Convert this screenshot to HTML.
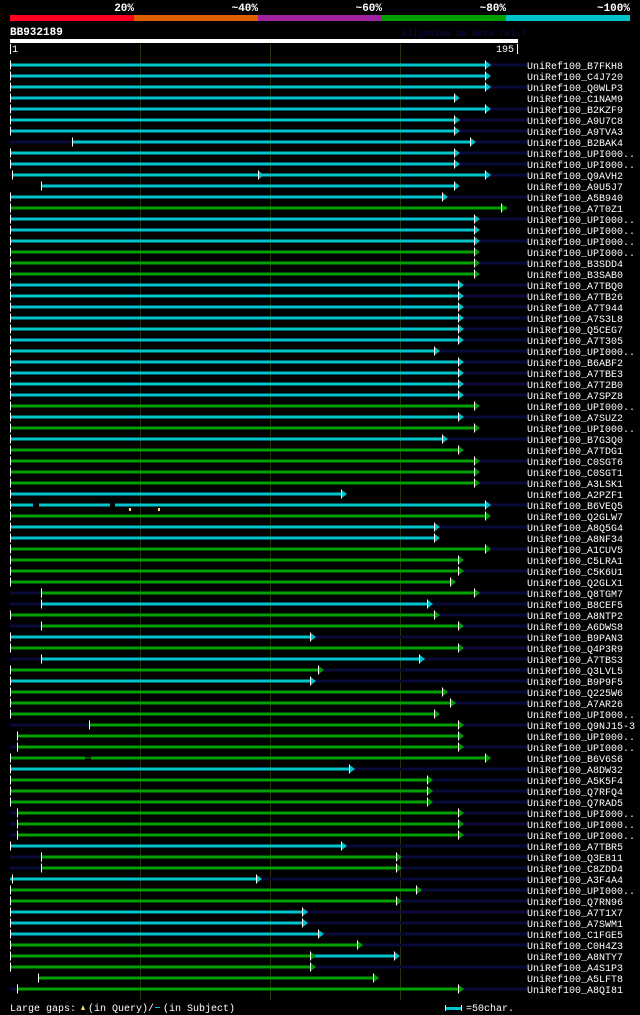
<!DOCTYPE html>
<html><head><meta charset="utf-8"><style>
html,body{margin:0;padding:0;background:#000;width:640px;height:1015px;overflow:hidden}
svg{display:block}
text{font-family:"Liberation Mono",monospace;font-size:10px;fill:#fff}
.t{fill:#0a0a38}.c{fill:#00c4cc}.g{fill:#00a000}.w{fill:#fff}
</style></head><body>
<svg width="640" height="1015" xmlns="http://www.w3.org/2000/svg">
<defs>
<symbol id="x"></symbol>
</defs>
<g font-weight="bold" style="font-weight:bold">
<text x="134" y="11" text-anchor="end" style="font-weight:bold;font-size:11px">20%</text>
<text x="258" y="11" text-anchor="end" style="font-weight:bold;font-size:11px">~40%</text>
<text x="382" y="11" text-anchor="end" style="font-weight:bold;font-size:11px">~60%</text>
<text x="506" y="11" text-anchor="end" style="font-weight:bold;font-size:11px">~80%</text>
<text x="630" y="11" text-anchor="end" style="font-weight:bold;font-size:11px">~100%</text>
</g>
<rect x="10" y="15" width="124" height="6" fill="#ff0020"/>
<rect x="134" y="15" width="124" height="6" fill="#e06000"/>
<rect x="258" y="15" width="124" height="6" fill="#a020a0"/>
<rect x="382" y="15" width="124" height="6" fill="#00a000"/>
<rect x="506" y="15" width="124" height="6" fill="#00c4cc"/>
<text x="10" y="35" style="font-weight:bold;font-size:11px">BB932189</text>
<text x="402" y="36" style="fill:#0a0a50;font-size:9px">AlignView.pm Beta rel.7</text>
<rect x="10" y="39" width="508" height="4" fill="#fff"/>
<rect x="140" y="44" width="1" height="956" fill="#303010"/>
<rect x="270" y="44" width="1" height="956" fill="#303010"/>
<rect x="400" y="44" width="1" height="956" fill="#303010"/>
<rect x="10" y="44" width="1" height="10" fill="#fff"/>
<text x="12" y="52">1</text>
<text x="496" y="52">195</text>
<rect x="517" y="44" width="1" height="10" fill="#fff"/>

<g id="rows">
<g transform="translate(0,65)"><rect class="t" x="10" y="-1.5" width="517" height="3"/><rect class="c" x="10" y="-1.5" width="475" height="3"/><path class="c" d="M485,-4.5L491,0L485,4.5Z"/><rect class="w" x="485" y="-4.5" width="1" height="9"/><rect class="w" x="10" y="-4.5" width="1" height="9"/><text x="527" y="4">UniRef100_B7FKH8</text></g>
<g transform="translate(0,76)"><rect class="c" x="10" y="-1.5" width="475" height="3"/><path class="c" d="M485,-4.5L491,0L485,4.5Z"/><rect class="w" x="485" y="-4.5" width="1" height="9"/><rect class="w" x="10" y="-4.5" width="1" height="9"/><text x="527" y="4">UniRef100_C4J720</text></g>
<g transform="translate(0,87)"><rect class="t" x="10" y="-1.5" width="517" height="3"/><rect class="c" x="10" y="-1.5" width="475" height="3"/><path class="c" d="M485,-4.5L491,0L485,4.5Z"/><rect class="w" x="485" y="-4.5" width="1" height="9"/><rect class="w" x="10" y="-4.5" width="1" height="9"/><text x="527" y="4">UniRef100_Q0WLP3</text></g>
<g transform="translate(0,98)"><rect class="c" x="10" y="-1.5" width="444" height="3"/><path class="c" d="M454,-4.5L460,0L454,4.5Z"/><rect class="w" x="454" y="-4.5" width="1" height="9"/><rect class="w" x="10" y="-4.5" width="1" height="9"/><text x="527" y="4">UniRef100_C1NAM9</text></g>
<g transform="translate(0,109)"><rect class="t" x="10" y="-1.5" width="517" height="3"/><rect class="c" x="10" y="-1.5" width="475" height="3"/><path class="c" d="M485,-4.5L491,0L485,4.5Z"/><rect class="w" x="485" y="-4.5" width="1" height="9"/><rect class="w" x="10" y="-4.5" width="1" height="9"/><text x="527" y="4">UniRef100_B2KZF9</text></g>
<g transform="translate(0,120)"><rect class="t" x="10" y="-1.5" width="517" height="3"/><rect class="c" x="10" y="-1.5" width="444" height="3"/><path class="c" d="M454,-4.5L460,0L454,4.5Z"/><rect class="w" x="454" y="-4.5" width="1" height="9"/><rect class="w" x="10" y="-4.5" width="1" height="9"/><text x="527" y="4">UniRef100_A9U7C8</text></g>
<g transform="translate(0,131)"><rect class="t" x="10" y="-1.5" width="517" height="3"/><rect class="c" x="10" y="-1.5" width="444" height="3"/><path class="c" d="M454,-4.5L460,0L454,4.5Z"/><rect class="w" x="454" y="-4.5" width="1" height="9"/><rect class="w" x="10" y="-4.5" width="1" height="9"/><text x="527" y="4">UniRef100_A9TVA3</text></g>
<g transform="translate(0,142)"><rect class="t" x="10" y="-1.5" width="517" height="3"/><rect class="c" x="72" y="-1.5" width="398" height="3"/><path class="c" d="M470,-4.5L476,0L470,4.5Z"/><rect class="w" x="470" y="-4.5" width="1" height="9"/><rect class="w" x="72" y="-4.5" width="1" height="9"/><text x="527" y="4">UniRef100_B2BAK4</text></g>
<g transform="translate(0,153)"><rect class="t" x="10" y="-1.5" width="517" height="3"/><rect class="c" x="10" y="-1.5" width="444" height="3"/><path class="c" d="M454,-4.5L460,0L454,4.5Z"/><rect class="w" x="454" y="-4.5" width="1" height="9"/><rect class="w" x="10" y="-4.5" width="1" height="9"/><text x="527" y="4">UniRef100_UPI000..</text></g>
<g transform="translate(0,164)"><rect class="t" x="10" y="-1.5" width="517" height="3"/><rect class="c" x="10" y="-1.5" width="444" height="3"/><path class="c" d="M454,-4.5L460,0L454,4.5Z"/><rect class="w" x="454" y="-4.5" width="1" height="9"/><rect class="w" x="10" y="-4.5" width="1" height="9"/><text x="527" y="4">UniRef100_UPI000..</text></g>
<g transform="translate(0,175)"><rect class="t" x="10" y="-1.5" width="517" height="3"/><rect class="c" x="12" y="-1.5" width="473" height="3"/><path class="c" d="M258,-4.5L264,0L258,4.5Z"/><rect class="w" x="258" y="-4.5" width="1" height="9"/><path class="c" d="M485,-4.5L491,0L485,4.5Z"/><rect class="w" x="485" y="-4.5" width="1" height="9"/><rect class="w" x="12" y="-4.5" width="1" height="9"/><text x="527" y="4">UniRef100_Q9AVH2</text></g>
<g transform="translate(0,186)"><rect class="c" x="41" y="-1.5" width="413" height="3"/><path class="c" d="M454,-4.5L460,0L454,4.5Z"/><rect class="w" x="454" y="-4.5" width="1" height="9"/><rect class="w" x="41" y="-4.5" width="1" height="9"/><text x="527" y="4">UniRef100_A9U5J7</text></g>
<g transform="translate(0,197)"><rect class="t" x="10" y="-1.5" width="517" height="3"/><rect class="c" x="10" y="-1.5" width="432" height="3"/><path class="c" d="M442,-4.5L448,0L442,4.5Z"/><rect class="w" x="442" y="-4.5" width="1" height="9"/><rect class="w" x="10" y="-4.5" width="1" height="9"/><text x="527" y="4">UniRef100_A5B940</text></g>
<g transform="translate(0,208)"><rect class="g" x="10" y="-1.5" width="497" height="3"/><path class="g" d="M501,-4.5L507,0L501,4.5Z"/><rect class="w" x="501" y="-4.5" width="1" height="9"/><rect class="w" x="10" y="-4.5" width="1" height="9"/><text x="527" y="4">UniRef100_A7T0Z1</text></g>
<g transform="translate(0,219)"><rect class="t" x="10" y="-1.5" width="517" height="3"/><rect class="c" x="10" y="-1.5" width="464" height="3"/><path class="c" d="M474,-4.5L480,0L474,4.5Z"/><rect class="w" x="474" y="-4.5" width="1" height="9"/><rect class="w" x="10" y="-4.5" width="1" height="9"/><text x="527" y="4">UniRef100_UPI000..</text></g>
<g transform="translate(0,230)"><rect class="c" x="10" y="-1.5" width="464" height="3"/><path class="c" d="M474,-4.5L480,0L474,4.5Z"/><rect class="w" x="474" y="-4.5" width="1" height="9"/><rect class="w" x="10" y="-4.5" width="1" height="9"/><text x="527" y="4">UniRef100_UPI000..</text></g>
<g transform="translate(0,241)"><rect class="t" x="10" y="-1.5" width="517" height="3"/><rect class="c" x="10" y="-1.5" width="464" height="3"/><path class="c" d="M474,-4.5L480,0L474,4.5Z"/><rect class="w" x="474" y="-4.5" width="1" height="9"/><rect class="w" x="10" y="-4.5" width="1" height="9"/><text x="527" y="4">UniRef100_UPI000..</text></g>
<g transform="translate(0,252)"><rect class="g" x="10" y="-1.5" width="464" height="3"/><path class="g" d="M474,-4.5L480,0L474,4.5Z"/><rect class="w" x="474" y="-4.5" width="1" height="9"/><rect class="w" x="10" y="-4.5" width="1" height="9"/><text x="527" y="4">UniRef100_UPI000..</text></g>
<g transform="translate(0,263)"><rect class="t" x="10" y="-1.5" width="517" height="3"/><rect class="g" x="10" y="-1.5" width="464" height="3"/><path class="g" d="M474,-4.5L480,0L474,4.5Z"/><rect class="w" x="474" y="-4.5" width="1" height="9"/><rect class="w" x="10" y="-4.5" width="1" height="9"/><text x="527" y="4">UniRef100_B3SDD4</text></g>
<g transform="translate(0,274)"><rect class="g" x="10" y="-1.5" width="464" height="3"/><path class="g" d="M474,-4.5L480,0L474,4.5Z"/><rect class="w" x="474" y="-4.5" width="1" height="9"/><rect class="w" x="10" y="-4.5" width="1" height="9"/><text x="527" y="4">UniRef100_B3SAB0</text></g>
<g transform="translate(0,285)"><rect class="t" x="10" y="-1.5" width="517" height="3"/><rect class="c" x="10" y="-1.5" width="448" height="3"/><path class="c" d="M458,-4.5L464,0L458,4.5Z"/><rect class="w" x="458" y="-4.5" width="1" height="9"/><rect class="w" x="10" y="-4.5" width="1" height="9"/><text x="527" y="4">UniRef100_A7TBQ0</text></g>
<g transform="translate(0,296)"><rect class="t" x="10" y="-1.5" width="517" height="3"/><rect class="c" x="10" y="-1.5" width="448" height="3"/><path class="c" d="M458,-4.5L464,0L458,4.5Z"/><rect class="w" x="458" y="-4.5" width="1" height="9"/><rect class="w" x="10" y="-4.5" width="1" height="9"/><text x="527" y="4">UniRef100_A7TB26</text></g>
<g transform="translate(0,307)"><rect class="t" x="10" y="-1.5" width="517" height="3"/><rect class="c" x="10" y="-1.5" width="448" height="3"/><path class="c" d="M458,-4.5L464,0L458,4.5Z"/><rect class="w" x="458" y="-4.5" width="1" height="9"/><rect class="w" x="10" y="-4.5" width="1" height="9"/><text x="527" y="4">UniRef100_A7T944</text></g>
<g transform="translate(0,318)"><rect class="t" x="10" y="-1.5" width="517" height="3"/><rect class="c" x="10" y="-1.5" width="448" height="3"/><path class="c" d="M458,-4.5L464,0L458,4.5Z"/><rect class="w" x="458" y="-4.5" width="1" height="9"/><rect class="w" x="10" y="-4.5" width="1" height="9"/><text x="527" y="4">UniRef100_A7S3L8</text></g>
<g transform="translate(0,329)"><rect class="t" x="10" y="-1.5" width="517" height="3"/><rect class="c" x="10" y="-1.5" width="448" height="3"/><path class="c" d="M458,-4.5L464,0L458,4.5Z"/><rect class="w" x="458" y="-4.5" width="1" height="9"/><rect class="w" x="10" y="-4.5" width="1" height="9"/><text x="527" y="4">UniRef100_Q5CEG7</text></g>
<g transform="translate(0,340)"><rect class="t" x="10" y="-1.5" width="517" height="3"/><rect class="c" x="10" y="-1.5" width="448" height="3"/><path class="c" d="M458,-4.5L464,0L458,4.5Z"/><rect class="w" x="458" y="-4.5" width="1" height="9"/><rect class="w" x="10" y="-4.5" width="1" height="9"/><text x="527" y="4">UniRef100_A7T305</text></g>
<g transform="translate(0,351)"><rect class="t" x="10" y="-1.5" width="517" height="3"/><rect class="c" x="10" y="-1.5" width="424" height="3"/><path class="c" d="M434,-4.5L440,0L434,4.5Z"/><rect class="w" x="434" y="-4.5" width="1" height="9"/><rect class="w" x="10" y="-4.5" width="1" height="9"/><text x="527" y="4">UniRef100_UPI000..</text></g>
<g transform="translate(0,362)"><rect class="t" x="10" y="-1.5" width="517" height="3"/><rect class="c" x="10" y="-1.5" width="448" height="3"/><path class="c" d="M458,-4.5L464,0L458,4.5Z"/><rect class="w" x="458" y="-4.5" width="1" height="9"/><rect class="w" x="10" y="-4.5" width="1" height="9"/><text x="527" y="4">UniRef100_B6ABF2</text></g>
<g transform="translate(0,373)"><rect class="t" x="10" y="-1.5" width="517" height="3"/><rect class="c" x="10" y="-1.5" width="448" height="3"/><path class="c" d="M458,-4.5L464,0L458,4.5Z"/><rect class="w" x="458" y="-4.5" width="1" height="9"/><rect class="w" x="10" y="-4.5" width="1" height="9"/><text x="527" y="4">UniRef100_A7TBE3</text></g>
<g transform="translate(0,384)"><rect class="t" x="10" y="-1.5" width="517" height="3"/><rect class="c" x="10" y="-1.5" width="448" height="3"/><path class="c" d="M458,-4.5L464,0L458,4.5Z"/><rect class="w" x="458" y="-4.5" width="1" height="9"/><rect class="w" x="10" y="-4.5" width="1" height="9"/><text x="527" y="4">UniRef100_A7T2B0</text></g>
<g transform="translate(0,395)"><rect class="t" x="10" y="-1.5" width="517" height="3"/><rect class="c" x="10" y="-1.5" width="448" height="3"/><path class="c" d="M458,-4.5L464,0L458,4.5Z"/><rect class="w" x="458" y="-4.5" width="1" height="9"/><rect class="w" x="10" y="-4.5" width="1" height="9"/><text x="527" y="4">UniRef100_A7SPZ8</text></g>
<g transform="translate(0,406)"><rect class="g" x="10" y="-1.5" width="464" height="3"/><path class="g" d="M474,-4.5L480,0L474,4.5Z"/><rect class="w" x="474" y="-4.5" width="1" height="9"/><rect class="w" x="10" y="-4.5" width="1" height="9"/><text x="527" y="4">UniRef100_UPI000..</text></g>
<g transform="translate(0,417)"><rect class="t" x="10" y="-1.5" width="517" height="3"/><rect class="c" x="10" y="-1.5" width="448" height="3"/><path class="c" d="M458,-4.5L464,0L458,4.5Z"/><rect class="w" x="458" y="-4.5" width="1" height="9"/><rect class="w" x="10" y="-4.5" width="1" height="9"/><text x="527" y="4">UniRef100_A7SUZ2</text></g>
<g transform="translate(0,428)"><rect class="g" x="10" y="-1.5" width="464" height="3"/><path class="g" d="M474,-4.5L480,0L474,4.5Z"/><rect class="w" x="474" y="-4.5" width="1" height="9"/><rect class="w" x="10" y="-4.5" width="1" height="9"/><text x="527" y="4">UniRef100_UPI000..</text></g>
<g transform="translate(0,439)"><rect class="t" x="10" y="-1.5" width="517" height="3"/><rect class="c" x="10" y="-1.5" width="432" height="3"/><path class="c" d="M442,-4.5L448,0L442,4.5Z"/><rect class="w" x="442" y="-4.5" width="1" height="9"/><rect class="w" x="10" y="-4.5" width="1" height="9"/><text x="527" y="4">UniRef100_B7G3Q0</text></g>
<g transform="translate(0,450)"><rect class="g" x="10" y="-1.5" width="448" height="3"/><path class="g" d="M458,-4.5L464,0L458,4.5Z"/><rect class="w" x="458" y="-4.5" width="1" height="9"/><rect class="w" x="10" y="-4.5" width="1" height="9"/><text x="527" y="4">UniRef100_A7TDG1</text></g>
<g transform="translate(0,461)"><rect class="t" x="10" y="-1.5" width="517" height="3"/><rect class="g" x="10" y="-1.5" width="464" height="3"/><path class="g" d="M474,-4.5L480,0L474,4.5Z"/><rect class="w" x="474" y="-4.5" width="1" height="9"/><rect class="w" x="10" y="-4.5" width="1" height="9"/><text x="527" y="4">UniRef100_C0SGT6</text></g>
<g transform="translate(0,472)"><rect class="g" x="10" y="-1.5" width="464" height="3"/><path class="g" d="M474,-4.5L480,0L474,4.5Z"/><rect class="w" x="474" y="-4.5" width="1" height="9"/><rect class="w" x="10" y="-4.5" width="1" height="9"/><text x="527" y="4">UniRef100_C0SGT1</text></g>
<g transform="translate(0,483)"><rect class="t" x="10" y="-1.5" width="517" height="3"/><rect class="g" x="10" y="-1.5" width="464" height="3"/><path class="g" d="M474,-4.5L480,0L474,4.5Z"/><rect class="w" x="474" y="-4.5" width="1" height="9"/><rect class="w" x="10" y="-4.5" width="1" height="9"/><text x="527" y="4">UniRef100_A3LSK1</text></g>
<g transform="translate(0,494)"><rect class="c" x="10" y="-1.5" width="331" height="3"/><path class="c" d="M341,-4.5L347,0L341,4.5Z"/><rect class="w" x="341" y="-4.5" width="1" height="9"/><rect class="w" x="10" y="-4.5" width="1" height="9"/><text x="527" y="4">UniRef100_A2PZF1</text></g>
<g transform="translate(0,505)"><rect class="t" x="10" y="-1.5" width="517" height="3"/><rect class="c" x="10" y="-1.5" width="475" height="3"/><rect x="33" y="-1.5" width="6" height="3" fill="#000"/><rect x="110" y="-1.5" width="5" height="3" fill="#000"/><rect x="129" y="3" width="2" height="3" fill="#ffe060"/><rect x="158" y="3" width="2" height="3" fill="#ffe060"/><path class="c" d="M485,-4.5L491,0L485,4.5Z"/><rect class="w" x="485" y="-4.5" width="1" height="9"/><rect class="w" x="10" y="-4.5" width="1" height="9"/><text x="527" y="4">UniRef100_B6VEQ5</text></g>
<g transform="translate(0,516)"><rect class="g" x="10" y="-1.5" width="475" height="3"/><path class="g" d="M485,-4.5L491,0L485,4.5Z"/><rect class="w" x="485" y="-4.5" width="1" height="9"/><rect class="w" x="10" y="-4.5" width="1" height="9"/><text x="527" y="4">UniRef100_Q2GLW7</text></g>
<g transform="translate(0,527)"><rect class="t" x="10" y="-1.5" width="517" height="3"/><rect class="c" x="10" y="-1.5" width="424" height="3"/><path class="c" d="M434,-4.5L440,0L434,4.5Z"/><rect class="w" x="434" y="-4.5" width="1" height="9"/><rect class="w" x="10" y="-4.5" width="1" height="9"/><text x="527" y="4">UniRef100_A8Q5G4</text></g>
<g transform="translate(0,538)"><rect class="c" x="10" y="-1.5" width="424" height="3"/><path class="c" d="M434,-4.5L440,0L434,4.5Z"/><rect class="w" x="434" y="-4.5" width="1" height="9"/><rect class="w" x="10" y="-4.5" width="1" height="9"/><text x="527" y="4">UniRef100_A8NF34</text></g>
<g transform="translate(0,549)"><rect class="t" x="10" y="-1.5" width="517" height="3"/><rect class="g" x="10" y="-1.5" width="475" height="3"/><path class="g" d="M485,-4.5L491,0L485,4.5Z"/><rect class="w" x="485" y="-4.5" width="1" height="9"/><rect class="w" x="10" y="-4.5" width="1" height="9"/><text x="527" y="4">UniRef100_A1CUV5</text></g>
<g transform="translate(0,560)"><rect class="g" x="10" y="-1.5" width="448" height="3"/><path class="g" d="M458,-4.5L464,0L458,4.5Z"/><rect class="w" x="458" y="-4.5" width="1" height="9"/><rect class="w" x="10" y="-4.5" width="1" height="9"/><text x="527" y="4">UniRef100_C5LRA1</text></g>
<g transform="translate(0,571)"><rect class="t" x="10" y="-1.5" width="517" height="3"/><rect class="g" x="10" y="-1.5" width="448" height="3"/><path class="g" d="M458,-4.5L464,0L458,4.5Z"/><rect class="w" x="458" y="-4.5" width="1" height="9"/><rect class="w" x="10" y="-4.5" width="1" height="9"/><text x="527" y="4">UniRef100_C5K6U1</text></g>
<g transform="translate(0,582)"><rect class="g" x="10" y="-1.5" width="440" height="3"/><path class="g" d="M450,-4.5L456,0L450,4.5Z"/><rect class="w" x="450" y="-4.5" width="1" height="9"/><rect class="w" x="10" y="-4.5" width="1" height="9"/><text x="527" y="4">UniRef100_Q2GLX1</text></g>
<g transform="translate(0,593)"><rect class="t" x="10" y="-1.5" width="517" height="3"/><rect class="g" x="41" y="-1.5" width="433" height="3"/><path class="g" d="M474,-4.5L480,0L474,4.5Z"/><rect class="w" x="474" y="-4.5" width="1" height="9"/><rect class="w" x="41" y="-4.5" width="1" height="9"/><text x="527" y="4">UniRef100_Q8TGM7</text></g>
<g transform="translate(0,604)"><rect class="t" x="10" y="-1.5" width="517" height="3"/><rect class="c" x="41" y="-1.5" width="386" height="3"/><path class="c" d="M427,-4.5L433,0L427,4.5Z"/><rect class="w" x="427" y="-4.5" width="1" height="9"/><rect class="w" x="41" y="-4.5" width="1" height="9"/><text x="527" y="4">UniRef100_B8CEF5</text></g>
<g transform="translate(0,615)"><rect class="t" x="10" y="-1.5" width="517" height="3"/><rect class="g" x="10" y="-1.5" width="424" height="3"/><path class="g" d="M434,-4.5L440,0L434,4.5Z"/><rect class="w" x="434" y="-4.5" width="1" height="9"/><rect class="w" x="10" y="-4.5" width="1" height="9"/><text x="527" y="4">UniRef100_A8NTP2</text></g>
<g transform="translate(0,626)"><rect class="t" x="10" y="-1.5" width="517" height="3"/><rect class="g" x="41" y="-1.5" width="417" height="3"/><path class="g" d="M458,-4.5L464,0L458,4.5Z"/><rect class="w" x="458" y="-4.5" width="1" height="9"/><rect class="w" x="41" y="-4.5" width="1" height="9"/><text x="527" y="4">UniRef100_A6DWS8</text></g>
<g transform="translate(0,637)"><rect class="t" x="10" y="-1.5" width="517" height="3"/><rect class="c" x="10" y="-1.5" width="300" height="3"/><path class="c" d="M310,-4.5L316,0L310,4.5Z"/><rect class="w" x="310" y="-4.5" width="1" height="9"/><rect class="w" x="10" y="-4.5" width="1" height="9"/><text x="527" y="4">UniRef100_B9PAN3</text></g>
<g transform="translate(0,648)"><rect class="t" x="10" y="-1.5" width="517" height="3"/><rect class="g" x="10" y="-1.5" width="448" height="3"/><path class="g" d="M458,-4.5L464,0L458,4.5Z"/><rect class="w" x="458" y="-4.5" width="1" height="9"/><rect class="w" x="10" y="-4.5" width="1" height="9"/><text x="527" y="4">UniRef100_Q4P3R9</text></g>
<g transform="translate(0,659)"><rect class="t" x="10" y="-1.5" width="517" height="3"/><rect class="c" x="41" y="-1.5" width="378" height="3"/><path class="c" d="M419,-4.5L425,0L419,4.5Z"/><rect class="w" x="419" y="-4.5" width="1" height="9"/><rect class="w" x="41" y="-4.5" width="1" height="9"/><text x="527" y="4">UniRef100_A7TBS3</text></g>
<g transform="translate(0,670)"><rect class="t" x="10" y="-1.5" width="517" height="3"/><rect class="g" x="10" y="-1.5" width="308" height="3"/><path class="g" d="M318,-4.5L324,0L318,4.5Z"/><rect class="w" x="318" y="-4.5" width="1" height="9"/><rect class="w" x="10" y="-4.5" width="1" height="9"/><text x="527" y="4">UniRef100_Q3LVL5</text></g>
<g transform="translate(0,681)"><rect class="t" x="10" y="-1.5" width="517" height="3"/><rect class="c" x="10" y="-1.5" width="300" height="3"/><path class="c" d="M310,-4.5L316,0L310,4.5Z"/><rect class="w" x="310" y="-4.5" width="1" height="9"/><rect class="w" x="10" y="-4.5" width="1" height="9"/><text x="527" y="4">UniRef100_B9P9F5</text></g>
<g transform="translate(0,692)"><rect class="t" x="10" y="-1.5" width="517" height="3"/><rect class="g" x="10" y="-1.5" width="432" height="3"/><path class="g" d="M442,-4.5L448,0L442,4.5Z"/><rect class="w" x="442" y="-4.5" width="1" height="9"/><rect class="w" x="10" y="-4.5" width="1" height="9"/><text x="527" y="4">UniRef100_Q225W6</text></g>
<g transform="translate(0,703)"><rect class="t" x="10" y="-1.5" width="517" height="3"/><rect class="g" x="10" y="-1.5" width="440" height="3"/><path class="g" d="M450,-4.5L456,0L450,4.5Z"/><rect class="w" x="450" y="-4.5" width="1" height="9"/><rect class="w" x="10" y="-4.5" width="1" height="9"/><text x="527" y="4">UniRef100_A7AR26</text></g>
<g transform="translate(0,714)"><rect class="g" x="10" y="-1.5" width="424" height="3"/><path class="g" d="M434,-4.5L440,0L434,4.5Z"/><rect class="w" x="434" y="-4.5" width="1" height="9"/><rect class="w" x="10" y="-4.5" width="1" height="9"/><text x="527" y="4">UniRef100_UPI000..</text></g>
<g transform="translate(0,725)"><rect class="t" x="10" y="-1.5" width="517" height="3"/><rect class="g" x="89" y="-1.5" width="369" height="3"/><path class="g" d="M458,-4.5L464,0L458,4.5Z"/><rect class="w" x="458" y="-4.5" width="1" height="9"/><rect class="w" x="89" y="-4.5" width="1" height="9"/><text x="527" y="4">UniRef100_Q9NJ15-3</text></g>
<g transform="translate(0,736)"><rect class="g" x="18" y="-1.5" width="440" height="3"/><path class="g" d="M458,-4.5L464,0L458,4.5Z"/><rect class="w" x="458" y="-4.5" width="1" height="9"/><rect class="w" x="17" y="-4.5" width="1" height="9"/><text x="527" y="4">UniRef100_UPI000..</text></g>
<g transform="translate(0,747)"><rect class="t" x="10" y="-1.5" width="517" height="3"/><rect class="g" x="18" y="-1.5" width="440" height="3"/><path class="g" d="M458,-4.5L464,0L458,4.5Z"/><rect class="w" x="458" y="-4.5" width="1" height="9"/><rect class="w" x="17" y="-4.5" width="1" height="9"/><text x="527" y="4">UniRef100_UPI000..</text></g>
<g transform="translate(0,758)"><rect class="g" x="10" y="-1.5" width="475" height="3"/><rect x="85" y="-1.5" width="6" height="3" fill="#000"/><rect x="85" y="-0.5" width="6" height="1" fill="#00a000"/><path class="g" d="M485,-4.5L491,0L485,4.5Z"/><rect class="w" x="485" y="-4.5" width="1" height="9"/><rect class="w" x="10" y="-4.5" width="1" height="9"/><text x="527" y="4">UniRef100_B6V6S6</text></g>
<g transform="translate(0,769)"><rect class="t" x="10" y="-1.5" width="517" height="3"/><rect class="c" x="10" y="-1.5" width="339" height="3"/><path class="c" d="M349,-4.5L355,0L349,4.5Z"/><rect class="w" x="349" y="-4.5" width="1" height="9"/><rect class="w" x="10" y="-4.5" width="1" height="9"/><text x="527" y="4">UniRef100_A8DW32</text></g>
<g transform="translate(0,780)"><rect class="t" x="10" y="-1.5" width="517" height="3"/><rect class="g" x="10" y="-1.5" width="417" height="3"/><path class="g" d="M427,-4.5L433,0L427,4.5Z"/><rect class="w" x="427" y="-4.5" width="1" height="9"/><rect class="w" x="10" y="-4.5" width="1" height="9"/><text x="527" y="4">UniRef100_A5K5F4</text></g>
<g transform="translate(0,791)"><rect class="t" x="10" y="-1.5" width="517" height="3"/><rect class="g" x="10" y="-1.5" width="417" height="3"/><path class="g" d="M427,-4.5L433,0L427,4.5Z"/><rect class="w" x="427" y="-4.5" width="1" height="9"/><rect class="w" x="10" y="-4.5" width="1" height="9"/><text x="527" y="4">UniRef100_Q7RFQ4</text></g>
<g transform="translate(0,802)"><rect class="t" x="10" y="-1.5" width="517" height="3"/><rect class="g" x="10" y="-1.5" width="417" height="3"/><path class="g" d="M427,-4.5L433,0L427,4.5Z"/><rect class="w" x="427" y="-4.5" width="1" height="9"/><rect class="w" x="10" y="-4.5" width="1" height="9"/><text x="527" y="4">UniRef100_Q7RAD5</text></g>
<g transform="translate(0,813)"><rect class="t" x="10" y="-1.5" width="517" height="3"/><rect class="g" x="18" y="-1.5" width="440" height="3"/><path class="g" d="M458,-4.5L464,0L458,4.5Z"/><rect class="w" x="458" y="-4.5" width="1" height="9"/><rect class="w" x="17" y="-4.5" width="1" height="9"/><text x="527" y="4">UniRef100_UPI000..</text></g>
<g transform="translate(0,824)"><rect class="t" x="10" y="-1.5" width="517" height="3"/><rect class="g" x="18" y="-1.5" width="440" height="3"/><path class="g" d="M458,-4.5L464,0L458,4.5Z"/><rect class="w" x="458" y="-4.5" width="1" height="9"/><rect class="w" x="17" y="-4.5" width="1" height="9"/><text x="527" y="4">UniRef100_UPI000..</text></g>
<g transform="translate(0,835)"><rect class="t" x="10" y="-1.5" width="517" height="3"/><rect class="g" x="18" y="-1.5" width="440" height="3"/><path class="g" d="M458,-4.5L464,0L458,4.5Z"/><rect class="w" x="458" y="-4.5" width="1" height="9"/><rect class="w" x="17" y="-4.5" width="1" height="9"/><text x="527" y="4">UniRef100_UPI000..</text></g>
<g transform="translate(0,846)"><rect class="t" x="10" y="-1.5" width="517" height="3"/><rect class="c" x="10" y="-1.5" width="331" height="3"/><path class="c" d="M341,-4.5L347,0L341,4.5Z"/><rect class="w" x="341" y="-4.5" width="1" height="9"/><rect class="w" x="10" y="-4.5" width="1" height="9"/><text x="527" y="4">UniRef100_A7TBR5</text></g>
<g transform="translate(0,857)"><rect class="t" x="10" y="-1.5" width="517" height="3"/><rect class="g" x="41" y="-1.5" width="355" height="3"/><path class="g" d="M396,-4.5L402,0L396,4.5Z"/><rect class="w" x="396" y="-4.5" width="1" height="9"/><rect class="w" x="41" y="-4.5" width="1" height="9"/><text x="527" y="4">UniRef100_Q3E811</text></g>
<g transform="translate(0,868)"><rect class="t" x="10" y="-1.5" width="517" height="3"/><rect class="g" x="41" y="-1.5" width="355" height="3"/><path class="g" d="M396,-4.5L402,0L396,4.5Z"/><rect class="w" x="396" y="-4.5" width="1" height="9"/><rect class="w" x="41" y="-4.5" width="1" height="9"/><text x="527" y="4">UniRef100_C8ZDD4</text></g>
<g transform="translate(0,879)"><rect class="t" x="10" y="-1.5" width="517" height="3"/><rect class="c" x="10" y="-1.5" width="246" height="3"/><path class="c" d="M256,-4.5L262,0L256,4.5Z"/><rect class="w" x="256" y="-4.5" width="1" height="9"/><rect class="w" x="12" y="-4.5" width="1" height="9"/><text x="527" y="4">UniRef100_A3F4A4</text></g>
<g transform="translate(0,890)"><rect class="t" x="10" y="-1.5" width="517" height="3"/><rect class="g" x="10" y="-1.5" width="406" height="3"/><path class="g" d="M416,-4.5L422,0L416,4.5Z"/><rect class="w" x="416" y="-4.5" width="1" height="9"/><rect class="w" x="10" y="-4.5" width="1" height="9"/><text x="527" y="4">UniRef100_UPI000..</text></g>
<g transform="translate(0,901)"><rect class="t" x="10" y="-1.5" width="517" height="3"/><rect class="g" x="10" y="-1.5" width="386" height="3"/><path class="g" d="M396,-4.5L402,0L396,4.5Z"/><rect class="w" x="396" y="-4.5" width="1" height="9"/><rect class="w" x="10" y="-4.5" width="1" height="9"/><text x="527" y="4">UniRef100_Q7RN96</text></g>
<g transform="translate(0,912)"><rect class="t" x="10" y="-1.5" width="517" height="3"/><rect class="c" x="10" y="-1.5" width="292" height="3"/><path class="c" d="M302,-4.5L308,0L302,4.5Z"/><rect class="w" x="302" y="-4.5" width="1" height="9"/><rect class="w" x="10" y="-4.5" width="1" height="9"/><text x="527" y="4">UniRef100_A7T1X7</text></g>
<g transform="translate(0,923)"><rect class="t" x="10" y="-1.5" width="517" height="3"/><rect class="c" x="10" y="-1.5" width="292" height="3"/><path class="c" d="M302,-4.5L308,0L302,4.5Z"/><rect class="w" x="302" y="-4.5" width="1" height="9"/><rect class="w" x="10" y="-4.5" width="1" height="9"/><text x="527" y="4">UniRef100_A7SWM1</text></g>
<g transform="translate(0,934)"><rect class="t" x="10" y="-1.5" width="517" height="3"/><rect class="c" x="10" y="-1.5" width="308" height="3"/><path class="c" d="M318,-4.5L324,0L318,4.5Z"/><rect class="w" x="318" y="-4.5" width="1" height="9"/><rect class="w" x="10" y="-4.5" width="1" height="9"/><text x="527" y="4">UniRef100_C1FGE5</text></g>
<g transform="translate(0,945)"><rect class="t" x="10" y="-1.5" width="517" height="3"/><rect class="g" x="10" y="-1.5" width="347" height="3"/><path class="g" d="M357,-4.5L363,0L357,4.5Z"/><rect class="w" x="357" y="-4.5" width="1" height="9"/><rect class="w" x="10" y="-4.5" width="1" height="9"/><text x="527" y="4">UniRef100_C0H4Z3</text></g>
<g transform="translate(0,956)"><rect class="g" x="10" y="-1.5" width="300" height="3"/><rect class="c" x="312" y="-1.5" width="83" height="3"/><path class="g" d="M310,-4.5L316,0L310,4.5Z"/><rect class="w" x="310" y="-4.5" width="1" height="9"/><path class="c" d="M394,-4.5L400,0L394,4.5Z"/><rect class="w" x="394" y="-4.5" width="1" height="9"/><rect class="w" x="10" y="-4.5" width="1" height="9"/><text x="527" y="4">UniRef100_A8NTY7</text></g>
<g transform="translate(0,967)"><rect class="t" x="10" y="-1.5" width="517" height="3"/><rect class="g" x="10" y="-1.5" width="300" height="3"/><path class="g" d="M310,-4.5L316,0L310,4.5Z"/><rect class="w" x="310" y="-4.5" width="1" height="9"/><rect class="w" x="10" y="-4.5" width="1" height="9"/><text x="527" y="4">UniRef100_A4S1P3</text></g>
<g transform="translate(0,978)"><rect class="g" x="38" y="-1.5" width="335" height="3"/><path class="g" d="M373,-4.5L379,0L373,4.5Z"/><rect class="w" x="373" y="-4.5" width="1" height="9"/><rect class="w" x="38" y="-4.5" width="1" height="9"/><text x="527" y="4">UniRef100_A5LFT8</text></g>
<g transform="translate(0,989)"><rect class="t" x="10" y="-1.5" width="517" height="3"/><rect class="g" x="18" y="-1.5" width="440" height="3"/><path class="g" d="M458,-4.5L464,0L458,4.5Z"/><rect class="w" x="458" y="-4.5" width="1" height="9"/><rect class="w" x="17" y="-4.5" width="1" height="9"/><text x="527" y="4">UniRef100_A8QI81</text></g>
</g>

<text x="10" y="1011">Large gaps:</text>
<path d="M81,1010L83,1005L85,1010Z" fill="#ffe060"/>
<text x="88" y="1011">(in Query)/</text>
<rect x="155" y="1007" width="5" height="1" fill="#00c4cc"/>
<text x="163" y="1011">(in Subject)</text>
<rect x="445" y="1005" width="1" height="6" fill="#fff"/>
<rect x="446" y="1007" width="15" height="3" fill="#00c4cc"/>
<rect x="461" y="1005" width="1" height="6" fill="#fff"/>
<text x="466" y="1011">=50char.</text>
</svg>
</body></html>
